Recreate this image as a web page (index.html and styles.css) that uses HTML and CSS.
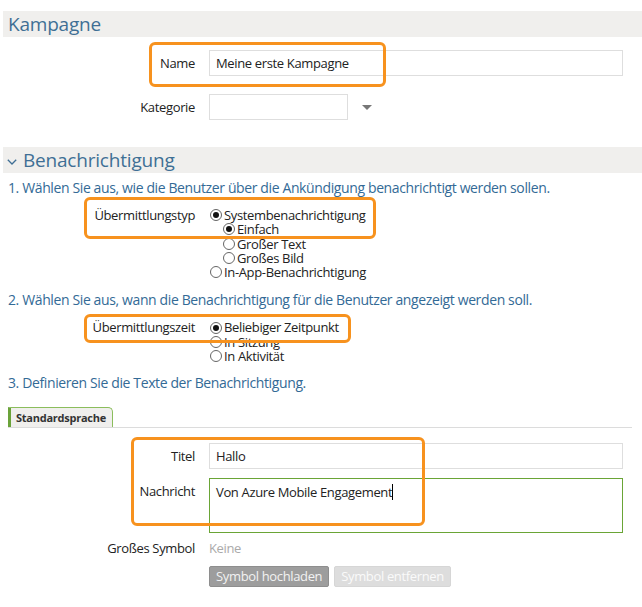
FILE: index.html
```html
<!DOCTYPE html>
<html lang="de">
<head>
<meta charset="utf-8">
<title>Kampagne</title>
<link rel="stylesheet" href="styles.css">
</head>
<body>
<div class="page">
  <div class="band"><span class="band-title">Kampagne</span></div>

  <div class="form-grid top-form">
    <div class="lbl">Name</div>
    <div class="field"><div class="input wide">Meine erste Kampagne</div></div>
    <div class="lbl">Kategorie</div>
    <div class="field"><div class="input narrow"></div><span class="caret"></span></div>
  </div>

  <div class="band band2">
    <svg class="chev" width="10" height="6" viewBox="0 0 10 6"><polyline points="0.8,0.8 5,5 9.2,0.8" fill="none" stroke="#3f6f95" stroke-width="1.3"/></svg>
    <span class="band-title">Benachrichtigung</span>
  </div>

  <p class="step step1">1. Wählen Sie aus, wie die Benutzer über die Ankündigung benachrichtigt werden sollen.</p>

  <div class="opt-group group1">
    <div class="lbl">Übermittlungstyp</div>
    <div class="radios">
      <div class="radio"><span class="dot on"></span>Systembenachrichtigung</div>
      <div class="radio sub"><span class="dot on"></span>Einfach</div>
      <div class="radio sub"><span class="dot"></span>Großer Text</div>
      <div class="radio sub"><span class="dot"></span>Großes Bild</div>
      <div class="radio"><span class="dot"></span>In-App-Benachrichtigung</div>
    </div>
  </div>

  <p class="step step2">2. Wählen Sie aus, wann die Benachrichtigung für die Benutzer angezeigt werden soll.</p>

  <div class="opt-group group2">
    <div class="lbl">Übermittlungszeit</div>
    <div class="radios">
      <div class="radio"><span class="dot on"></span>Beliebiger Zeitpunkt</div>
      <div class="radio"><span class="dot"></span>In Sitzung</div>
      <div class="radio"><span class="dot"></span>In Aktivität</div>
    </div>
  </div>

  <p class="step step3">3. Definieren Sie die Texte der Benachrichtigung.</p>

  <div class="tabs"><div class="tab">Standardsprache</div></div>

  <div class="form-grid text-form">
    <div class="lbl">Titel</div>
    <div class="field"><div class="input wide">Hallo</div></div>
    <div class="lbl">Nachricht</div>
    <div class="field"><div class="textarea">Von Azure Mobile Engagement<span class="cursor"></span></div></div>
  </div>

  <div class="form-grid icon-form">
    <div class="lbl small">Großes Symbol</div>
    <div class="field"><span class="none">Keine</span></div>
  </div>
  <div class="buttons">
    <span class="btn btn-dark">Symbol hochladen</span>
    <span class="btn btn-light">Symbol entfernen</span>
  </div>

  <div class="mark mark1"></div>
  <div class="mark mark2"></div>
  <div class="mark mark3"></div>
  <div class="mark mark4"></div>
</div>
</body>
</html>
```
FILE: styles.css
```css
* { box-sizing: border-box; }
html, body { margin: 0; padding: 0; background: #fff; }
body {
  font-family: "Open Sans", "Noto Sans", "DejaVu Sans", sans-serif;
  font-size: 13px;
  letter-spacing: -0.35px;
  color: #222;
}
.page {
  position: relative;
  width: 642px;
  height: 607px;
  padding-top: 11px;
  overflow: hidden;
}
.band {
  margin-left: 3px;
  height: 26px;
  background: #f0efed;
  display: flex;
  align-items: center;
  padding-left: 5px;
}
.band-title {
  font-size: 19px;
  line-height: 26px;
  color: #3f6f95;
  letter-spacing: -0.2px;
}
.band2 { margin-top: 27px; padding-left: 4px; }
.chev { margin-right: 6px; margin-top: 3px; }

.form-grid {
  display: grid;
  grid-template-columns: 195px 414px;
  column-gap: 14px;
}
.top-form { margin-top: 13px; row-gap: 18px; }
.lbl {
  text-align: right;
  line-height: 26px;
  white-space: nowrap;
}
.field { display: flex; align-items: center; }
.input {
  height: 26px;
  border: 1px solid #dedede;
  line-height: 24px;
  padding-left: 6px;
  background: #fff;
}
.wide { width: 414px; }
.narrow { width: 139px; }
.caret {
  margin-left: 14px;
  width: 0; height: 0;
  border-left: 5px solid transparent;
  border-right: 5px solid transparent;
  border-top: 5px solid #777;
}

.step {
  margin: 0;
  padding-left: 8px;
  font-size: 14px;
  letter-spacing: -0.38px;
  line-height: 18px;
  color: #336a96;
  white-space: nowrap;
}
.step1 { margin-top: 6px; }
.step2 { margin-top: 12px; }
.step3 { margin-top: 11px; }

.opt-group {
  display: grid;
  grid-template-columns: 195px auto;
  column-gap: 15px;
  margin-top: 11px;
  line-height: 14.3px;
}
.opt-group .lbl { line-height: 14.3px; }
.radio {
  display: flex;
  align-items: center;
  white-space: nowrap;
}
.radio.sub { padding-left: 13px; }
.dot {
  width: 12px; height: 12px;
  border: 1px solid #666;
  border-radius: 50%;
  margin-right: 2px;
  display: inline-flex;
  align-items: center;
  justify-content: center;
  background: #fff;
}
.dot.on::after {
  content: "";
  width: 6px; height: 6px;
  border-radius: 50%;
  background: #111;
}

.tabs {
  margin-top: 15px;
  margin-left: 8px;
  width: 624px;
  border-bottom: 1px solid #dcdcdc;
  height: 21px;
}
.tab {
  width: 105px;
  height: 20px;
  background: #f0efed;
  border-left: 3px solid #6ba33a;
  border-top: 1px solid #8bbd5c;
  border-right: 1px solid #8bbd5c;
  border-top-right-radius: 5px;
  font-size: 11px;
  font-weight: bold;
  letter-spacing: -0.25px;
  color: #333;
  line-height: 19px;
  padding-left: 5px;
}

.text-form { margin-top: 15px; row-gap: 9px; }
.textarea {
  width: 414px;
  height: 55px;
  border: 1px solid #6aa536;
  padding: 4px 6px;
  line-height: 18px;
}
.cursor {
  display: inline-block;
  width: 1px;
  height: 16px;
  background: #000;
  vertical-align: -3px;
}
.icon-form { margin-top: 7px; }
.icon-form .lbl, .icon-form .field { line-height: 16px; }
.none { color: #aaa; }

.buttons {
  margin-top: 10px;
  margin-left: 209px;
  display: flex;
  gap: 5px;
}
.btn {
  display: inline-block;
  height: 21px;
  line-height: 19px;
  padding: 0 6px;
  border-radius: 2px;
  white-space: nowrap;
}
.btn-dark { background: #9d9d9d; border: 1px solid #8e8e8e; color: #f2f2f2; }
.btn-light { background: #dddddd; border: 1px solid #d6d6d6; color: #fafafa; }

.mark {
  position: absolute;
  border: 3px solid #f7921e;
  border-radius: 6px;
  pointer-events: none;
}
.mark1 { left: 149px; top: 42px; width: 237px; height: 45px; }
.mark2 { left: 84px; top: 197px; width: 292px; height: 42px; }
.mark3 { left: 84px; top: 314px; width: 267px; height: 29px; }
.mark4 { left: 131px; top: 437px; width: 294px; height: 89px; }
```
